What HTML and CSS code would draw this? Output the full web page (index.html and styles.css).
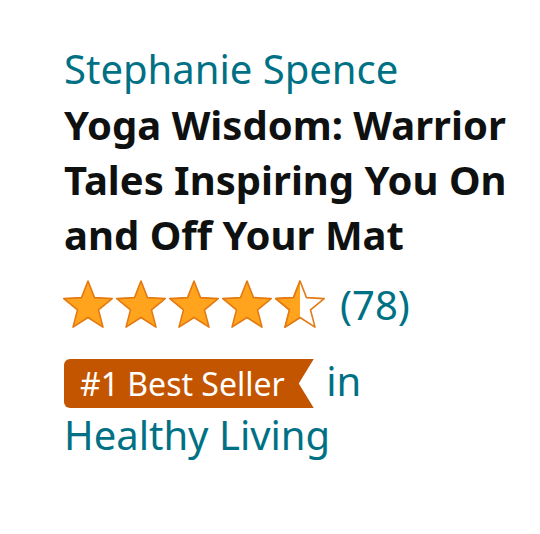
FILE: index.html
```html
<!DOCTYPE html>
<html>
<head>
<meta charset="utf-8">
<link rel="stylesheet" href="styles.css">
</head>
<body>
<div class="card">
  <div class="author">Stephanie Spence</div>
  <div class="title">Yoga Wisdom: Warrior Tales Inspiring You On and Off Your Mat</div>
  <div class="rating">
    <svg class="stars" viewBox="0 0 274 49" width="274" height="49">
      <defs>
        <path id="st" d="M26 1 L32.5 17.6 L50.2 18.6 L36.5 29.9 L41 47.1 L26 37.5 L11 47.1 L15.5 29.9 L1.8 18.6 L19.5 17.6 Z"/>
        <clipPath id="half"><rect x="0" y="0" width="26" height="49"/></clipPath>
      </defs>
      <g fill="#FFA41C" stroke="#E47911" stroke-width="1.6" stroke-linejoin="round">
        <use href="#st" x="0"/>
        <use href="#st" x="53"/>
        <use href="#st" x="106"/>
        <use href="#st" x="159"/>
        <g transform="translate(212 0)">
          <use href="#st" fill="#fff"/>
          <use href="#st" clip-path="url(#half)"/>
        </g>
      </g>
    </svg>
    <span class="count">(78)</span>
  </div>
  <div class="seller"><span class="badge">#1 Best Seller</span> in Healthy Living</div>
</div>
</body>
</html>
```
FILE: styles.css
```css
html, body {
  margin: 0;
  padding: 0;
  background: #fff;
}
.card {
  padding: 47px 20px 0 64px;
  font-family: "Noto Sans", "Open Sans", sans-serif;
}
.author {
  color: #007185;
  font-size: 40px;
  line-height: 44px;
}
.title {
  color: #0F1111;
  font-size: 40px;
  font-weight: 700;
  line-height: 55px;
  margin-top: 6px;
}
.rating {
  display: flex;
  align-items: center;
  gap: 4px;
  margin-top: 18px;
  margin-left: -2px;
}
.stars {
  display: block;
}
.count {
  color: #007185;
  font-size: 40px;
  line-height: 49px;
}
.seller {
  color: #007185;
  font-size: 40px;
  line-height: 54px;
  margin-top: 25px;
  max-width: 420px;
}
.badge {
  display: inline-block;
  background: #C45500;
  color: #fff;
  font-size: 32px;
  line-height: 49px;
  padding: 0 29px 0 16px;
  border-radius: 6px 0 0 6px;
  clip-path: polygon(0 0, 100% 0, calc(100% - 15px) 50%, 100% 100%, 0 100%);
  margin-right: 2px;
}
```
